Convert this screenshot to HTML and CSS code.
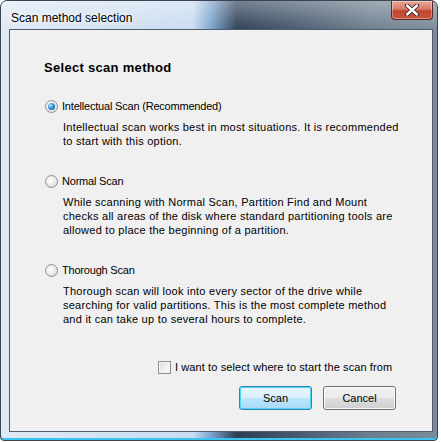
FILE: index.html
```html
<!DOCTYPE html>
<html lang="en">
<head>
  <meta charset="UTF-8">
  <title>Scan method selection</title>
  <link rel="stylesheet" href="styles.css">
</head>
<body>
  <div class="window">
    <div class="titlebar">
      <span class="title">Scan method selection</span>
      <div class="close-btn">
        <svg width="20" height="12" viewBox="0 0 20 12">
          <path d="M5 1.5 L15 10.5 M15 1.5 L5 10.5" stroke="#3a2020" stroke-width="4.2" stroke-linecap="round"/>
          <path d="M5 1.5 L15 10.5 M15 1.5 L5 10.5" stroke="#ffffff" stroke-width="2.4" stroke-linecap="round"/>
        </svg>
      </div>
    </div>

    <div class="client">
      <h2 class="heading">Select scan method</h2>

      <div class="option">
        <label class="radio-row"><span class="radio checked"></span>Intellectual Scan (Recommended)</label>
        <p class="desc">Intellectual scan works best in most situations. It is recommended<br>to start with this option.</p>
      </div>

      <div class="option">
        <label class="radio-row"><span class="radio"></span>Normal Scan</label>
        <p class="desc">While scanning with Normal Scan, Partition Find and Mount<br>checks all areas of the disk where standard partitioning tools are<br>allowed to place the beginning of a partition.</p>
      </div>

      <div class="option">
        <label class="radio-row"><span class="radio"></span>Thorough Scan</label>
        <p class="desc">Thorough scan will look into every sector of the drive while<br>searching for valid partitions. This is the most complete method<br>and it can take up to several hours to complete.</p>
      </div>

      <div class="check-row">
        <span class="checkbox"></span>I want to select where to start the scan from
      </div>

      <div class="buttons">
        <button class="btn btn-default">Scan</button>
        <button class="btn">Cancel</button>
      </div>
    </div>
  </div>
</body>
</html>
```

FILE: styles.css
```css
body {
  margin: 0;
  background: #ffffff;
  font-family: "Liberation Sans", Arial, sans-serif;
  font-size: 11px;
  color: #000;
}
.window {
  width: 438px;
  height: 441px;
  box-sizing: border-box;
  border: 1px solid #3b4450;
  border-radius: 7px 7px 4px 4px;
  padding: 0 4px 8px 8px;
  background:
    linear-gradient(to bottom, rgba(255,255,255,0.35), rgba(255,255,255,0) 30px),
    linear-gradient(to right, #dfe9f5 0%, #c9dcf0 44%, #7fa6d0 48%, #2c3f56 54%, #4d5f72 70%, #6d7e8e 85%, #7b8b99 100%);
  box-shadow: inset 0 -2px 0 #38c4f0;
  display: flex;
  flex-direction: column;
}
.titlebar {
  height: 28px;
  display: flex;
  justify-content: space-between;
  align-items: flex-start;
}
.title {
  font-size: 12px;
  margin: 9px 0 0 2px;
  line-height: 16px;
  color: #000;
  text-shadow: 0 0 6px #fff, 0 0 3px #fff;
}
.close-btn {
  width: 42px;
  height: 19px;
  box-sizing: border-box;
  border: 1px solid #5a2a24;
  border-top: none;
  border-radius: 0 0 4px 4px;
  background: linear-gradient(to bottom, #e9a99c 0%, #d77a67 45%, #c2452c 55%, #c7553c 100%);
  box-shadow: inset 0 0 0 1px rgba(255,255,255,0.35);
  display: flex;
  align-items: center;
  justify-content: center;
}
.client {
  flex: 1;
  border: 1px solid #4e5c6b;
  background: #f0f0f0;
  padding: 0 0 0 34px;
}
.heading {
  font-size: 13px;
  font-weight: bold;
  letter-spacing: 0.3px;
  margin: 30px 0 23px 0;
  line-height: 16px;
}
.option {
  margin-bottom: 26px;
}
.radio-row {
  display: flex;
  align-items: center;
  gap: 4px;
  line-height: 14px;
  margin-left: 1px;
  letter-spacing: -0.2px;
}
.radio {
  width: 11px;
  height: 11px;
  border-radius: 50%;
  border: 1px solid #8e8f8f;
  background: radial-gradient(circle at 40% 40%, #ffffff 0%, #e6e6e6 60%, #cfcfcf 100%);
  position: relative;
}
.radio.checked::after {
  content: "";
  position: absolute;
  left: 2px;
  top: 2px;
  width: 7px;
  height: 7px;
  border-radius: 50%;
  background: radial-gradient(circle at 35% 35%, #a6e3ff 0%, #2e8fd6 50%, #0d4f90 100%);
}
.desc {
  margin: 7px 0 0 19px;
  line-height: 14px;
  letter-spacing: 0.25px;
}
.check-row {
  display: flex;
  align-items: center;
  gap: 4px;
  margin: 34px 0 0 114px;
  line-height: 14px;
  letter-spacing: 0.1px;
}
.checkbox {
  width: 11px;
  height: 11px;
  border: 1px solid #8e8f8f;
  background: linear-gradient(135deg, #dcdcdc, #ffffff);
  box-shadow: inset 0 0 0 1px #f4f4f4;
}
.buttons {
  display: flex;
  gap: 11px;
  margin: 12px 0 0 195px;
}
.btn {
  width: 73px;
  height: 24px;
  border: 1px solid #707070;
  border-radius: 3px;
  background: linear-gradient(to bottom, #f2f2f2 0%, #ebebeb 48%, #dddddd 52%, #cfcfcf 100%);
  box-shadow: inset 0 0 0 1px rgba(255,255,255,0.8);
  font-family: "Liberation Sans", Arial, sans-serif;
  font-size: 11px;
  color: #000;
  padding: 0;
}
.btn-default {
  border-color: #3c7fb1;
  background: linear-gradient(to bottom, #eaf6fd 0%, #d9f0fc 48%, #bee6fd 52%, #a7d9f5 100%);
  box-shadow: inset 0 0 0 1px #48d8fb;
}
```
